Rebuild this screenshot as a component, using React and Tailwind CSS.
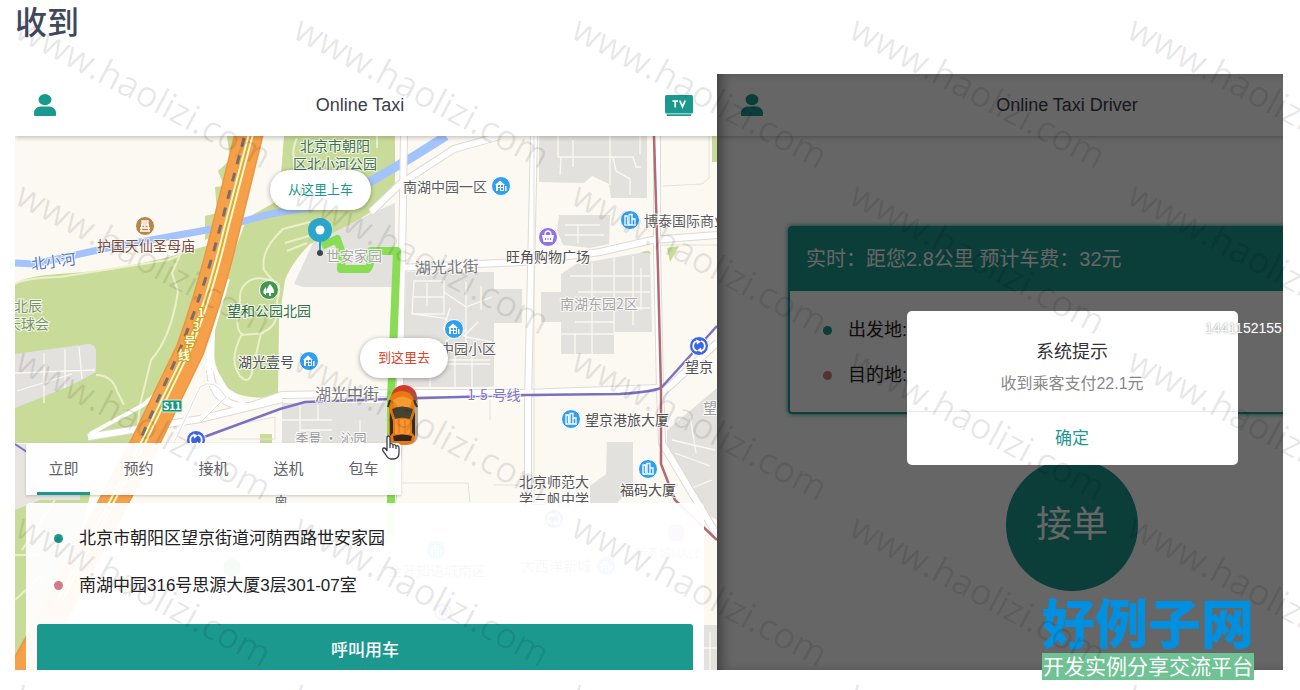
import React, { useState } from "react";

const TEAL = "#1c998f";
const tabs = ["立即", "预约", "接机", "送机", "包车"];

const watermarkCols = [0, 278, 556, 834, 1112];
const watermarkRows = [0, 166, 332, 498, 664];

const labels = [
  { x: 335, y: 151, text: "北京市朝阳", fill: "#3f7350", size: 14 },
  { x: 335, y: 169, text: "区北小河公园", fill: "#3f7350", size: 14 },
  { x: 445, y: 192, text: "南湖中园一区", fill: "#5c5c5c", size: 14 },
  { x: 146, y: 251, text: "护国天仙圣母庙", fill: "#7d4c38", size: 14 },
  { x: 54, y: 267, text: "北小河", fill: "#5577bd", size: 15, rotate: -7 },
  { x: 28, y: 311, text: "北辰", fill: "#78936b", size: 14 },
  { x: 28, y: 329, text: "天球会", fill: "#78936b", size: 14 },
  { x: 354, y: 261, text: "世安家园", fill: "#a5a5a5", size: 14 },
  { x: 269, y: 316, text: "望和公园北园", fill: "#2f7041", size: 14 },
  { x: 266, y: 367, text: "湖光壹号", fill: "#4f5257", size: 14 },
  { x: 447, y: 273, text: "湖光北街", fill: "#7a7a7a", size: 16, rotate: -2 },
  { x: 548, y: 262, text: "旺角购物广场", fill: "#4f4f4f", size: 14 },
  { x: 686, y: 226, text: "博泰国际商业", fill: "#5c5c5c", size: 14 },
  { x: 599, y: 309, text: "南湖东园2区", fill: "#a5a5a5", size: 14 },
  { x: 468, y: 354, text: "中园小区", fill: "#5c5c5c", size: 14 },
  { x: 347, y: 400, text: "湖光中街", fill: "#777777", size: 16 },
  { x: 494, y: 400, text: "1-5-号线", fill: "#8175c3", size: 14 },
  { x: 627, y: 425, text: "望京港旅大厦", fill: "#4f4f4f", size: 14 },
  { x: 699, y: 372, text: "望京", fill: "#4f4f4f", size: 14 },
  { x: 717, y: 413, text: "望京", fill: "#999999", size: 14 },
  { x: 331, y: 443, text: "季景 · 沁园", fill: "#9a9a9a", size: 13 },
  { x: 554, y: 487, text: "北京师范大", fill: "#555555", size: 14 },
  { x: 554, y: 504, text: "学三帆中学", fill: "#555555", size: 14 },
  { x: 648, y: 495, text: "福码大厦", fill: "#4f4f4f", size: 14 },
  { x: 281, y: 504, text: "南", fill: "#666666", size: 13 },
  { x: 437, y: 576, text: "金开知语城南区", fill: "#777777", size: 14 },
  { x: 556, y: 571, text: "大西洋新城", fill: "#777777", size: 14 },
  { x: 668, y: 558, text: "新荟城MALL", fill: "#aa77aa", size: 12 },
];

const PersonIcon = () => (
  <svg viewBox="0 0 22 22" className="h-[22px] w-[22px]" fill={TEAL} aria-hidden="true">
    <ellipse cx="11" cy="5.6" rx="6.5" ry="5.6" />
    <path d="M0 21V19C0 14.5 4 12.6 8 12.6H14C18 12.6 22 14.5 22 19V21Q22 22 21 22H1Q0 22 0 21Z" />
  </svg>
);

const TvIcon = () => (
  <svg viewBox="0 0 28 22" className="h-[22px] w-7" aria-hidden="true">
    <rect y="1" width="28" height="18.5" rx="1.5" fill={TEAL} />
    <path d="M1.5 20.3H26.5L26 22H2Z" fill={TEAL} />
    <path d="M7.500 7.200H13M10.200 7.200V13.500M14.800 6.500L17.500 12.800L20.200 6.500" stroke="#fff" strokeWidth="1.7" fill="none" />
  </svg>
);

const House = ({ x, y }) => (
  <g transform={`translate(${x} ${y})`}>
    <circle r="9.5" fill="#2f9ff0" stroke="#fff" />
    <path d="M-6-1L-1-5.5L4-1H3V5H-5V-1ZM4 0H5.5V5H4Z" fill="#fff" />
    <path d="M-3-1H-1V1H-3ZM0-1H2V1H0ZM-3 2H-1V5H-3ZM0 2H2V4H0Z" fill="#2f9ff0" />
  </g>
);

const Tower = ({ x, y }) => (
  <g transform={`translate(${x} ${y})`}>
    <circle r="9.5" fill="#2f9ff0" stroke="#fff" />
    <path d="M-5 5V-4H-2.5V4M-1 5V-5.5H2V5M2-1H5V5H-5.5" stroke="#fff" strokeWidth="1.3" fill="none" />
  </g>
);

const Metro = ({ x, y }) => (
  <g transform={`translate(${x} ${y})`}>
    <circle r="9.5" fill="#3d63e6" stroke="#fff" />
    <path d="M-2 5A5.2 5.2 0 0 1-2-5M2-5A5.2 5.2 0 0 1 2 5" stroke="#fff" strokeWidth="1.8" fill="none" />
    <path d="M-3-6.5L2-4.5L-2-1.5ZM3 6.5L-2 4.5L2 1.5Z" fill="#fff" />
  </g>
);

const Car = () => (
  <g>
    <circle cx="404" cy="398" r="13" fill="#d43a2b" />
    <rect x="391" y="391" width="27" height="54" rx="10" fill="#776a5c" opacity=".55" />
    <path d="M389 401Q391 391 402 391Q412 391 414 401L415 414V439Q414 445 402 445Q390 445 389 439V414Z" fill="#e8790f" />
    <path d="M393 400Q402 393 412 400L410 407H394Z" fill="#f69a32" />
    <path d="M392 409Q402 404 413 409L410 419Q402 416 395 419Z" fill="#45422f" />
    <path d="M390 412L393 421V433L390 436ZM415 412L412 421V433L415 436Z" fill="#38291b" />
    <rect x="395" y="419" width="15" height="15" fill="#f89532" />
    <path d="M399 420V433M405 420V433" stroke="#df700e" />
    <path d="M393 436Q402 433 412 436L411 441H394Z" fill="#33251a" />
    <path d="M390 400L388 407M414 400L417 407" stroke="#3a3028" strokeWidth="2" />
  </g>
);

const CityMap = () => (
  <svg
    viewBox="15 136 702 534"
    preserveAspectRatio="xMinYMin slice"
    className="absolute inset-0 h-full w-full"
    fontFamily="'Noto Sans CJK SC', sans-serif"
    role="img"
    aria-label="地图"
  >
    <rect x="15" y="136" width="1400" height="900" fill="#fcf8f2" />

    {/* parks */}
    <g fill="#c9db98">
      <path d="M15 284Q22 278 46 275L110 270L165 258L216 243L235 225L205 240V216L217 213L215 187L224 186L218 171L230 160L227 136H250L155 443H15Z" />
      <path d="M284 136H395V193L371 212L345 228L310 244Q292 262 285 280L279 320L278 396Q240 402 225 385Q212 368 212 330L235 250L247 218L279 200Z" />
      <path d="M15 495H90L70 580L28 670H15Z" />
      <path d="M332 420H360V443H332ZM260 434H272V443H260ZM712 136H717V162H712ZM667 248L679 246L670 262ZM640 253Q650 248 651 254ZM704 432L717 425V467L708 457L698 453Z" />
    </g>
    <path d="M15 354L88 344Q96 344 96 352V372L72 385L15 408Z" fill="#e3e1de" />
    <path d="M15 444L80 443V500H40L15 510Z" fill="#e8e5e0" />

    {/* built-up blocks */}
    <g fill="#e3e1dd">
      <path d="M294 284L313 243L370 214L395 203V287H303Z" />
      <path d="M406 272H494V387H403ZM494 289H522V323H494Z" />
      <path d="M539 136H647V198H611L609 184L592 176L584 183L539 182Z" />
      <path d="M559 215H610L609 244L590 248L563 245L557 230Z" />
      <path d="M561 274L576 264L640 253H650L652 332H614V354H561V322H541V292H561Z" />
      <path d="M282 403H390V443H282Z" />
      <path d="M717 388L667 430V448L696 509L717 520ZM607 442H633V485L612 509H590V486L606 474ZM704 625H717V670H700Z" />
    </g>
    <g stroke="#fcf8f2" strokeWidth="1.3" fill="none">
      <path d="M558 136V157H610V185M610 136V184M560 175L561 157M573 167V140M640 136V154M610 157H633L636 167H641M613 157L616 171L630 179V195" />
      <path d="M414 281H444V314H412ZM427 283V306M444 292L466 307L492 297M466 282V356M414 297H444M414 314L444 318L466 337L492 342M446 341L466 330M481 286V310M478 322L465 335M450 308L443 330M442 360H490" />
      <path d="M455 345V387M472 345V387M412 340H430V387M430 364H490" />
      <path d="M592 263V340M614 254V332M633 256V325M570 276L650 276M578 292H650M614 308L650 308M579 308H614M575 322H614M575 334V354M592 334V354M561 334H614M641 268V310" />
      <path d="M565 225H600M565 235H604M578 224V243" />
      <path d="M300 405V443M282 420H332M318 405V420M360 420V443M300 430H332" />
      <path d="M44 353V403M65 349V388M79 347L82 379M15 373L95 370M17 391L72 374" />
      <path d="M675 453L710 466M672 440L715 450M690 416L696 453M692 488L712 480M710 632V670M704 648H717" />
    </g>
    <g stroke="#eaf0cc" strokeWidth="2" fill="none">
      <path d="M15 284Q24 278 60 277L168 260L180 255L172 273L178 291Q171 338 151 360L140 405L136 443M96 375Q112 375 117 391L124 405" />
      <path d="M270 280C248 273 239 288 240 300Q234 330 242 334Q228 360 240 376Q250 387 253 368L261 333Q281 326 277 301Q284 281 270 280M242 335L264 333M283 229Q260 250 264 270L274 282M283 229L310 222M285 243L309 236M287 251L307 243M297 138Q291 150 295 167M337 148L354 150M377 148V136" />
      <path d="M15 555H40M22 550L55 500M15 600L42 575" />
    </g>

    {/* river */}
    <g stroke="#a3c3fc" fill="none">
      <path d="M15 263L34 264L112 247L218 228L270 214L331 204" strokeWidth="7" />
      <path d="M368 183L411 158L446 136" strokeWidth="9" />
    </g>

    {/* small roads */}
    <g stroke="#dedad5" strokeWidth="8" fill="none">
      <path d="M404 136L399 443L392 505" />
      <path d="M534 136L531 270L528 400V509" />
      <path d="M397 268L522 262L600 252L652 240L717 235" />
      <path d="M210 370Q212 408 250 406L282 395L400 393H525L660 388" />
      <path d="M88 437L200 419L282 399" />
      <path d="M657 136V248L660 389L662 443L717 535" />
      <path d="M717 343L660 395M371 212L400 184L454 149L500 136" />
    </g>
    <g stroke="#fff" strokeWidth="6" fill="none">
      <path d="M404 136L399 443L392 505" />
      <path d="M534 136L531 270L528 400V509" />
      <path d="M397 268L522 262L600 252L652 240L717 235" />
      <path d="M210 370Q212 408 250 406L282 395L400 393H525L660 388" />
      <path d="M88 437L200 419L282 399" />
      <path d="M657 136V248L660 389L662 443L717 535" />
      <path d="M717 343L660 395M371 212L400 184L454 149L500 136" />
      <path d="M90 434L143 405L190 365M174 443L200 387Q214 377 226 397L200 419M209 343V375M228 279L213 330L212 365L228 393L245 403" strokeWidth="4" />
    </g>
    <g stroke="#e4e0db" fill="none">
      <path d="M534 136V509M660 245H717M663 186L702 184L709 178V136M403 483H468L470 502M493 485H528M490 400V420M174 443L200 387Q214 377 226 397L200 423M185 443L235 425L275 417V439H220" />
    </g>

    {/* expressway */}
    <path d="M250 130L223 240Q209 297 190 350L145 443L113 503L62 600L18 680" stroke="#e99740" strokeWidth="29" fill="none" />
    <path d="M250 130L223 240Q209 297 190 350L145 443L113 503L62 600L18 680" stroke="#f6a04a" strokeWidth="26" fill="none" />
    <path d="M252 130L227 225Q208 304 188 350L144 441L110 505L60 600" stroke="#fff6d6" strokeWidth="6" fill="none" />
    <path d="M252 130L227 225Q208 304 188 350L144 441L110 505L60 600" stroke="#d9ae20" strokeWidth="2" fill="none" />
    <path d="M244 138L219 232Q201 300 175 361L141 438" stroke="#77706a" strokeWidth="3" strokeDasharray="9 9" fill="none" />
    <g fontSize="12" fontWeight="700" fill="#fffbe0" stroke="#c99a14" strokeWidth="2" paintOrder="stroke" textAnchor="middle">
      <text x="201" y="317">1</text>
      <text x="196" y="331">3</text>
      <text x="190" y="346">号</text>
      <text x="184" y="360">线</text>
    </g>

    {/* metro lines */}
    <path d="M196 440L280 409L305 402L390 399L525 395L620 394Q650 392 661 388L717 326" stroke="#7c70c0" strokeWidth="2.5" fill="none" />
    <path d="M15 444L27 452" stroke="#7c70c0" strokeWidth="2" />
    <path d="M654 136L658 270L661 390V464L675 500L717 540" stroke="#b16a74" strokeWidth="2.5" fill="none" />

    {/* route */}
    <path d="M322 246L337 239L342 253L341 269H367Q371 268 371 251H397L391 400V535" stroke="#89dd55" strokeWidth="8" strokeLinejoin="round" fill="none" />

    <g textAnchor="middle" stroke="#fff" strokeOpacity=".8" strokeWidth="2" paintOrder="stroke">
      {labels.map(({ x, y, text, fill, size, rotate }) => (
        <text key={`${text}${y}`} x={x} y={y} fill={fill} fontSize={size} transform={rotate ? `rotate(${rotate} ${x} ${y})` : undefined}>
          {text}
        </text>
      ))}
    </g>

    <House x={501} y={186} />
    <House x={309} y={361} />
    <House x={454} y={329} />
    <House x={436} y={550} />
    <House x={606} y={566} />
    <Tower x={630} y={220} />
    <Tower x={571} y={419} />
    <Tower x={648} y={469} />
    <Metro x={196} y={440} />
    <Metro x={699} y={346} />
    <Metro x={554} y={519} />
    <Metro x={443} y={612} />

    <g transform="translate(145 226)">
      <circle r="9.5" fill="#b98545" stroke="#fff" />
      <path d="M-3-5H3V-3H-3ZM-4-1H4M-5 2H5M-5 5H5M-2.5-3L-4 5M2.5-3L4 5M0-1V2" stroke="#fff" strokeWidth="1.3" fill="none" />
    </g>
    <g transform="translate(269 290)">
      <circle r="9.5" fill="#42974e" stroke="#fff" />
      <path d="M1-6Q6 0 5 3H2V6H0V3H-3Q-3-1 1-6ZM-3-3Q-7 1-5 4H-4V5H-3V4Z" fill="#fff" />
    </g>
    <g transform="translate(548 237)">
      <circle r="9.5" fill="#9272e8" stroke="#fff" />
      <path d="M-6-2H6L4.500 5H-4.500Z" fill="#fff" />
      <path d="M-3-2Q-3-6 0-6Q3-6 3-2" stroke="#fff" strokeWidth="1.3" fill="none" />
      <path d="M-2.500 1V3M0 1V3M2.500 1V3" stroke="#9272e8" />
    </g>
    <circle cx="676" cy="533" r="9" fill="#c08de0" />
    <circle cx="232" cy="568" r="9" fill="#63b65f" />

    <rect x="162" y="400" width="20" height="12" rx="1" fill="#16977f" stroke="#d6ecd5" />
    <text x="172" y="410" textAnchor="middle" fontSize="10" fontWeight="700" fill="#fff">S11</text>

    {/* pickup pin */}
    <path d="M320 236V253" stroke="#23a0c2" strokeWidth="2" />
    <circle cx="320" cy="230" r="12" fill="#2aa6ca" />
    <circle cx="320" cy="230" r="4.500" fill="#fff" />
    <circle cx="320" cy="253" r="3" fill="#3d4346" />
    <Car />
  </svg>
);

const PhoneHeader = ({ title, cols, action }) => (
  <header className={`relative z-10 grid h-[62px] shrink-0 items-center bg-white shadow-[0_2px_4px_rgba(0,0,0,0.2)] ${cols}`}>
    <button type="button" aria-label="个人中心" className="justify-self-center">
      <PersonIcon />
    </button>
    <h2 className="text-center text-lg text-[#3c3c4b]">{title}</h2>
    {action}
  </header>
);

const Passenger = () => {
  const [active, setActive] = useState(tabs[0]);

  return (
    <section className="flex min-w-0 flex-col overflow-hidden">
      <PhoneHeader
        title="Online Taxi"
        cols="grid-cols-[60px_1fr_72px]"
        action={
          <button type="button" aria-label="TV" className="ml-5">
            <TvIcon />
          </button>
        }
      />
      <div className="relative flex flex-1 flex-col justify-end gap-2 pr-[13px] pl-[11px]">
        <CityMap />
        <span className="absolute top-[34px] left-[255px] rounded-full bg-white px-[18px] py-2.5 text-[13px] leading-5 text-[#1c998f] shadow-[0_1px_5px_rgba(0,0,0,0.35)]">
          从这里上车
        </span>
        <span className="absolute top-[202px] left-[345px] rounded-full bg-white px-[18px] py-2.5 text-[13px] leading-5 text-[#e0442b] shadow-[0_1px_5px_rgba(0,0,0,0.35)]">
          到这里去
        </span>
        <nav className="relative flex gap-[22px] self-start rounded-t-[4px] bg-white/95 px-[11px] shadow-[0_1px_3px_rgba(0,0,0,0.2)]">
          {tabs.map((tab) => (
            <button
              key={tab}
              type="button"
              onClick={() => setActive(tab)}
              className={`h-[52px] w-[53px] border-b-3 pt-1 text-[15px] text-[#606266] ${active === tab ? "border-[#1c998f]" : "border-transparent"}`}
            >
              {tab}
            </button>
          ))}
        </nav>
        <svg viewBox="0 0 20 26" className="absolute top-[299px] left-[366px] h-[26px] w-5" aria-hidden="true">
          <path
            d="M6 14V3Q6 1 7.500 1T9 3V9Q11 8 12 10Q14 9 15 11Q18 10 18 13V18Q18 24 12 24H10Q7 24 5 20L2 16Q1 13 3 13Q5 13 6 16ZM9 9V13M12 10V13M15 11V14"
            fill="#fff"
            stroke="#3c3c55"
            strokeWidth="1.3"
          />
        </svg>
        <div className="relative rounded-t-[4px] bg-white/95 px-[11px] pt-3 text-[17px] text-[#222]">
          <p className="flex h-[47px] items-center gap-4 pl-[17px]">
            <i className="h-[9px] w-[9px] rounded-full bg-[#1c998f]" />
            北京市朝阳区望京街道河荫西路世安家园
          </p>
          <p className="flex h-[47px] items-center gap-4 pl-[17px]">
            <i className="h-[9px] w-[9px] rounded-full bg-[#d17a88]" />
            南湖中园316号思源大厦3层301-07室
          </p>
          <button type="button" className="mt-[15px] block h-[46px] w-full rounded-t-[3px] bg-[#1c998f] pt-2 font-medium text-white">
            呼叫用车
          </button>
        </div>
      </div>
    </section>
  );
};

const Driver = () => (
  <section className="relative min-w-0 overflow-hidden bg-white">
    <div className="w-[700px]">
      <PhoneHeader title="Online Taxi Driver" cols="grid-cols-[70px_1fr_70px]" />
      <article className="mt-[90px] ml-[71px] rounded-[4px] border-2 border-[#1c998f] shadow-[0_0_5px_#1c998f]">
        <h3 className="bg-[#1c998f] px-4 pt-4 pb-[17px] text-xl leading-[30px] text-white">
          实时：距您2.8公里 预计车费：32元
        </h3>
        <div className="pt-[17px] pb-3.5 pl-[33px] text-[18px] text-[#222]">
          <p className="flex h-[45px] items-center gap-4">
            <i className="h-[9px] w-[9px] rounded-full bg-[#1c998f]" />
            出发地:
          </p>
          <p className="flex h-[45px] items-center gap-4">
            <i className="h-[9px] w-[9px] rounded-full bg-[#d17a88]" />
            目的地:
          </p>
        </div>
      </article>
    </div>
    <div className="mt-[45px] flex w-[710px] justify-center">
      <button type="button" className="h-[132px] w-[132px] rounded-full bg-[#1c998f] text-4xl text-white">
        接单
      </button>
    </div>
    {/* modal mask */}
    <div className="absolute inset-y-0 left-0 z-20 w-[710px] bg-black/60 pt-[237px] shadow-[inset_8px_0_12px_-4px_rgba(0,0,0,0.4)]">
      <div role="dialog" aria-labelledby="tip" className="mx-auto w-[331px] rounded-[5px] bg-white text-center">
        <h3 id="tip" className="pt-7 text-lg leading-[26px] text-[#333]">系统提示</h3>
        <p className="pt-[7px] pb-[15px] text-base leading-6 text-[#888]">收到乘客支付22.1元</p>
        <button type="button" className="h-[54px] w-full border-t border-[#e8e8e8] text-[17px] text-[#1c998f]">
          确定
        </button>
      </div>
    </div>
    <span className="absolute top-[244px] left-[488px] z-30 text-sm text-white [text-shadow:0_0_2px_#777]">1441152155</span>
  </section>
);

const Watermark = () => (
  <svg className="pointer-events-none absolute inset-0 z-40 h-full w-full" aria-hidden="true">
    <g fill="#000" fillOpacity=".09" fontFamily="'Open Sans', sans-serif" fontSize="36">
      {watermarkRows.map((y) =>
        watermarkCols.map((x) => (
          <text key={`${x}-${y}`} transform={`translate(${x + 13} ${y + 37}) rotate(28)`}>
            www.haolizi.com
          </text>
        ))
      )}
    </g>
  </svg>
);

const App = () => {
  return (
    <div className="relative flex min-h-screen flex-col overflow-hidden bg-white pr-[17px] pb-5 pl-[15px] font-['Liberation_Sans','Noto_Sans_CJK_SC',sans-serif]">
      <h1 className="mb-7 text-[32px] leading-[46px] font-medium text-[#3f485c]">收到</h1>
      <main className="grid flex-1 grid-cols-[702fr_566fr]">
        <Passenger />
        <Driver />
      </main>
      <div className="absolute right-[46px] bottom-2.5 z-30 w-[212px] text-center">
        <p className="text-[53px] leading-[54px] font-black whitespace-nowrap text-[#0090df]">好例子网</p>
        <p className="bg-[#6fc294] text-[21px] leading-[27px] whitespace-nowrap text-white">开发实例分享交流平台</p>
      </div>
      <Watermark />
    </div>
  );
};

export default App;
